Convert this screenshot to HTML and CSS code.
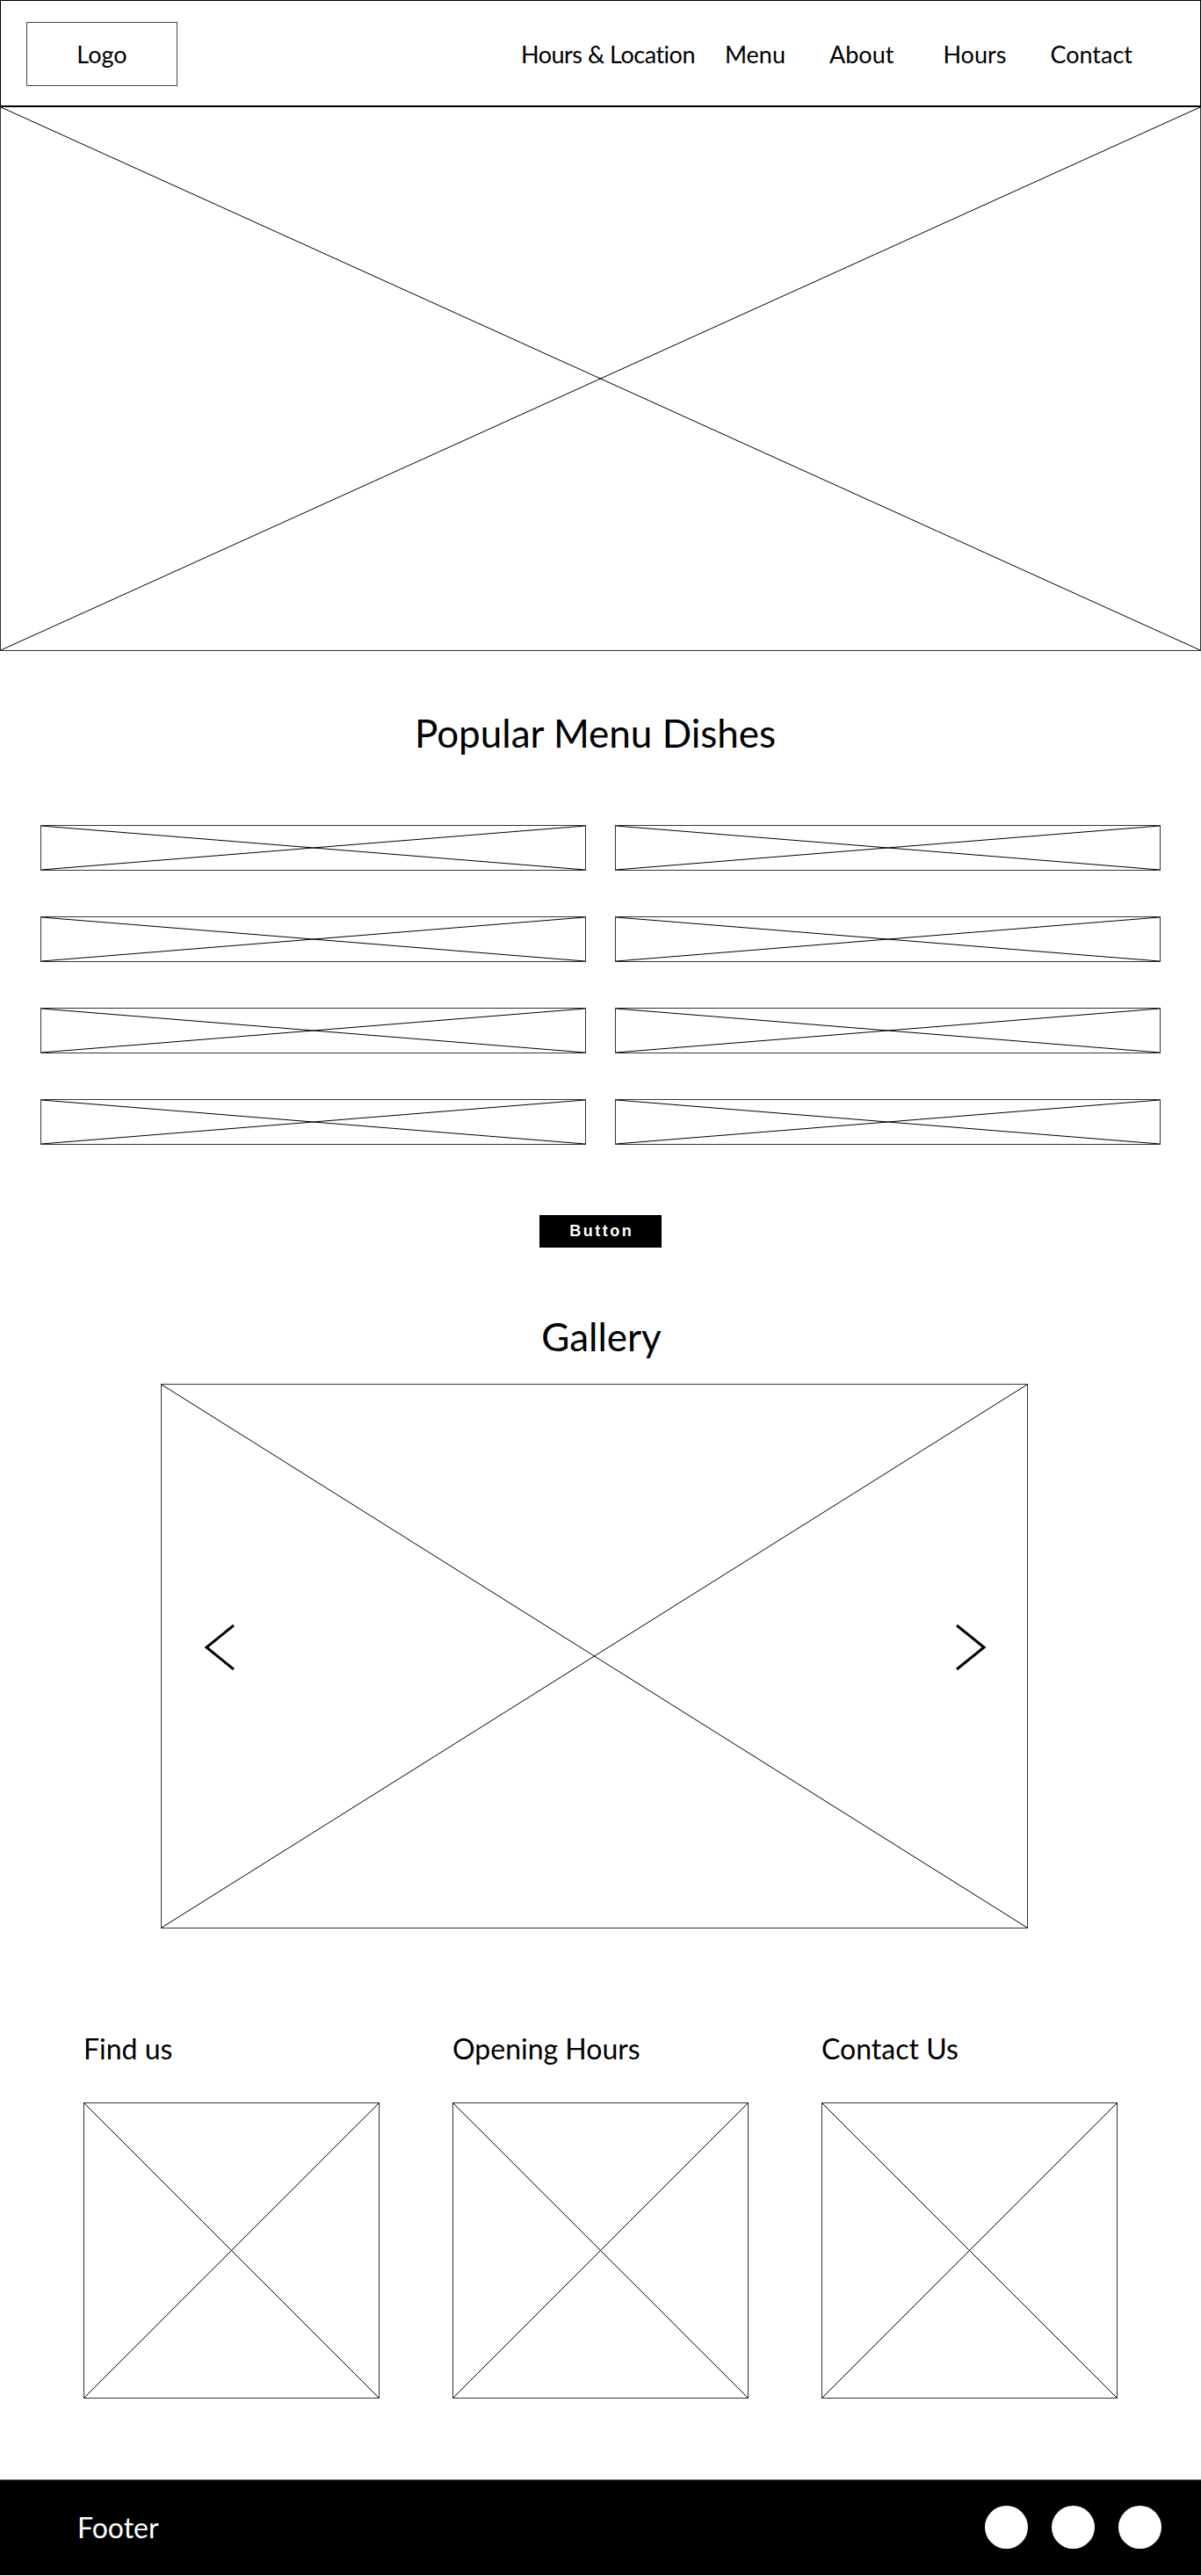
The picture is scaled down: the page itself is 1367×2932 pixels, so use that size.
FILE: index.html
```html
<!DOCTYPE html>
<html lang="en">
<head>
  <meta charset="UTF-8" />
  <meta name="viewport" content="width=device-width, initial-scale=1" />
  <title>Restaurant Wireframe</title>
  <link rel="stylesheet" href="styles.css">
</head>
<body>

  <header class="site-header">
    <div class="logo">Logo</div>
    <nav class="nav">
      <a href="#" class="nav-first">Hours &amp; Location</a>
      <a href="#" class="nav-menu">Menu</a>
      <a href="#" class="nav-about">About</a>
      <a href="#" class="nav-hours">Hours</a>
      <a href="#" class="nav-contact">Contact</a>
    </nav>
  </header>

  <div class="hero placeholder">
    <svg class="x" viewBox="0 0 100 100" preserveAspectRatio="none"><line x1="0" y1="0" x2="100" y2="100" vector-effect="non-scaling-stroke"/><line x1="100" y1="0" x2="0" y2="100" vector-effect="non-scaling-stroke"/></svg>
  </div>

  <section class="dishes">
    <h2>Popular Menu Dishes</h2>
    <div class="dish-grid">
      <div class="dish placeholder"><svg class="x" viewBox="0 0 100 100" preserveAspectRatio="none"><line x1="0" y1="0" x2="100" y2="100" vector-effect="non-scaling-stroke"/><line x1="100" y1="0" x2="0" y2="100" vector-effect="non-scaling-stroke"/></svg></div>
      <div class="dish placeholder"><svg class="x" viewBox="0 0 100 100" preserveAspectRatio="none"><line x1="0" y1="0" x2="100" y2="100" vector-effect="non-scaling-stroke"/><line x1="100" y1="0" x2="0" y2="100" vector-effect="non-scaling-stroke"/></svg></div>
      <div class="dish placeholder"><svg class="x" viewBox="0 0 100 100" preserveAspectRatio="none"><line x1="0" y1="0" x2="100" y2="100" vector-effect="non-scaling-stroke"/><line x1="100" y1="0" x2="0" y2="100" vector-effect="non-scaling-stroke"/></svg></div>
      <div class="dish placeholder"><svg class="x" viewBox="0 0 100 100" preserveAspectRatio="none"><line x1="0" y1="0" x2="100" y2="100" vector-effect="non-scaling-stroke"/><line x1="100" y1="0" x2="0" y2="100" vector-effect="non-scaling-stroke"/></svg></div>
      <div class="dish placeholder"><svg class="x" viewBox="0 0 100 100" preserveAspectRatio="none"><line x1="0" y1="0" x2="100" y2="100" vector-effect="non-scaling-stroke"/><line x1="100" y1="0" x2="0" y2="100" vector-effect="non-scaling-stroke"/></svg></div>
      <div class="dish placeholder"><svg class="x" viewBox="0 0 100 100" preserveAspectRatio="none"><line x1="0" y1="0" x2="100" y2="100" vector-effect="non-scaling-stroke"/><line x1="100" y1="0" x2="0" y2="100" vector-effect="non-scaling-stroke"/></svg></div>
      <div class="dish placeholder"><svg class="x" viewBox="0 0 100 100" preserveAspectRatio="none"><line x1="0" y1="0" x2="100" y2="100" vector-effect="non-scaling-stroke"/><line x1="100" y1="0" x2="0" y2="100" vector-effect="non-scaling-stroke"/></svg></div>
      <div class="dish placeholder"><svg class="x" viewBox="0 0 100 100" preserveAspectRatio="none"><line x1="0" y1="0" x2="100" y2="100" vector-effect="non-scaling-stroke"/><line x1="100" y1="0" x2="0" y2="100" vector-effect="non-scaling-stroke"/></svg></div>
    </div>
    <button class="btn">Button</button>
  </section>

  <section class="gallery">
    <h2>Gallery</h2>
    <div class="gallery-frame placeholder">
      <svg class="x" viewBox="0 0 100 100" preserveAspectRatio="none"><line x1="0" y1="0" x2="100" y2="100" vector-effect="non-scaling-stroke"/><line x1="100" y1="0" x2="0" y2="100" vector-effect="non-scaling-stroke"/></svg>
      <svg class="arrow arrow-prev" viewBox="0 0 36 54"><polyline points="34,2 3,27 34,52"/></svg>
      <svg class="arrow arrow-next" viewBox="0 0 36 54"><polyline points="2,2 33,27 2,52"/></svg>
    </div>
  </section>

  <section class="info">
    <div class="info-col">
      <h3>Find us</h3>
      <div class="info-box placeholder"><svg class="x" viewBox="0 0 100 100" preserveAspectRatio="none"><line x1="0" y1="0" x2="100" y2="100" vector-effect="non-scaling-stroke"/><line x1="100" y1="0" x2="0" y2="100" vector-effect="non-scaling-stroke"/></svg></div>
    </div>
    <div class="info-col">
      <h3>Opening Hours</h3>
      <div class="info-box placeholder"><svg class="x" viewBox="0 0 100 100" preserveAspectRatio="none"><line x1="0" y1="0" x2="100" y2="100" vector-effect="non-scaling-stroke"/><line x1="100" y1="0" x2="0" y2="100" vector-effect="non-scaling-stroke"/></svg></div>
    </div>
    <div class="info-col">
      <h3>Contact Us</h3>
      <div class="info-box placeholder"><svg class="x" viewBox="0 0 100 100" preserveAspectRatio="none"><line x1="0" y1="0" x2="100" y2="100" vector-effect="non-scaling-stroke"/><line x1="100" y1="0" x2="0" y2="100" vector-effect="non-scaling-stroke"/></svg></div>
    </div>
  </section>

  <footer class="site-footer">
    <span class="footer-text">Footer</span>
    <div class="socials">
      <span class="dot"></span>
      <span class="dot"></span>
      <span class="dot"></span>
    </div>
  </footer>

</body>
</html>
```

FILE: styles.css
```css
body {
  margin: 0;
  font-family: Lato, 'Open Sans', sans-serif;
  color: #000;
  background: #fff;
}
h2, h3 {
  margin: 0;
  font-weight: normal;
  line-height: 1.2;
}
h2 {
  font-size: 44px;
}

/* wireframe box with an X */
.placeholder {
  position: relative;
  box-sizing: border-box;
  border: 1px solid #333;
}
.x {
  display: block;
  width: 100%;
  height: 100%;
}
.x line {
  stroke: #000;
  stroke-width: 1;
}

.site-header {
  box-sizing: border-box;
  height: 122px;
  border: 1px solid #000;
  border-bottom: 2px solid #000;
  display: flex;
  align-items: center;
  justify-content: space-between;
  padding: 2px 77px 0 29px;
}
.logo {
  box-sizing: border-box;
  width: 172px;
  height: 73px;
  border: 1px solid #444;
  display: flex;
  align-items: center;
  justify-content: center;
  font-size: 27px;
}
.nav {
  display: flex;
}
.nav a {
  color: #000;
  text-decoration: none;
  font-size: 27px;
}
.nav-first {
  letter-spacing: -0.5px;
}
.nav-menu {
  margin-left: 34px;
}
.nav-about {
  margin-left: 50px;
}
.nav-hours {
  margin-left: 56px;
}
.nav-contact {
  margin-left: 50px;
}

.hero {
  height: 619px;
  border-top: none;
}

.dishes {
  display: flex;
  flex-direction: column;
  align-items: center;
  padding-top: 67px;
}
.dishes h2 {
  padding-right: 12px;
}
.dish-grid {
  display: grid;
  grid-template-columns: repeat(2, 621px);
  grid-auto-rows: 52px;
  column-gap: 33px;
  row-gap: 52px;
  margin-top: 78px;
}
.btn {
  margin-top: 80px;
  width: 139px;
  height: 37px;
  border: none;
  background: #000;
  color: #fff;
  font-family: 'Liberation Sans', Arial, sans-serif;
  font-weight: bold;
  font-size: 18px;
  letter-spacing: 2.5px;
  padding: 0 0 0 2.5px;
}

.gallery {
  padding-top: 75px;
}
.gallery h2 {
  text-align: center;
  padding-left: 2px;
}
.gallery-frame {
  width: 987px;
  height: 620px;
  margin: 27px 0 0 183px;
}
.arrow {
  position: absolute;
  top: 272px;
  width: 36px;
  height: 54px;
}
.arrow polyline {
  fill: none;
  stroke: #000;
  stroke-width: 3;
}
.arrow-prev {
  left: 48px;
}
.arrow-next {
  right: 46px;
}

.info {
  display: grid;
  grid-template-columns: repeat(3, 337px);
  column-gap: 83px;
  padding: 118px 0 0 95px;
}
.info h3 {
  font-size: 32px;
}
.info-box {
  width: 337px;
  height: 337px;
  margin-top: 42px;
}

.site-footer {
  box-sizing: border-box;
  height: 109px;
  margin-top: 92px;
  background: #000;
  border-top: 1px solid #666;
  display: flex;
  align-items: center;
  justify-content: space-between;
  padding: 0 45px 0 88px;
}
.footer-text {
  color: #fff;
  font-size: 32px;
}
.socials {
  display: flex;
  gap: 27px;
}
.dot {
  width: 49px;
  height: 49px;
  border-radius: 50%;
  background: #fff;
}
```
